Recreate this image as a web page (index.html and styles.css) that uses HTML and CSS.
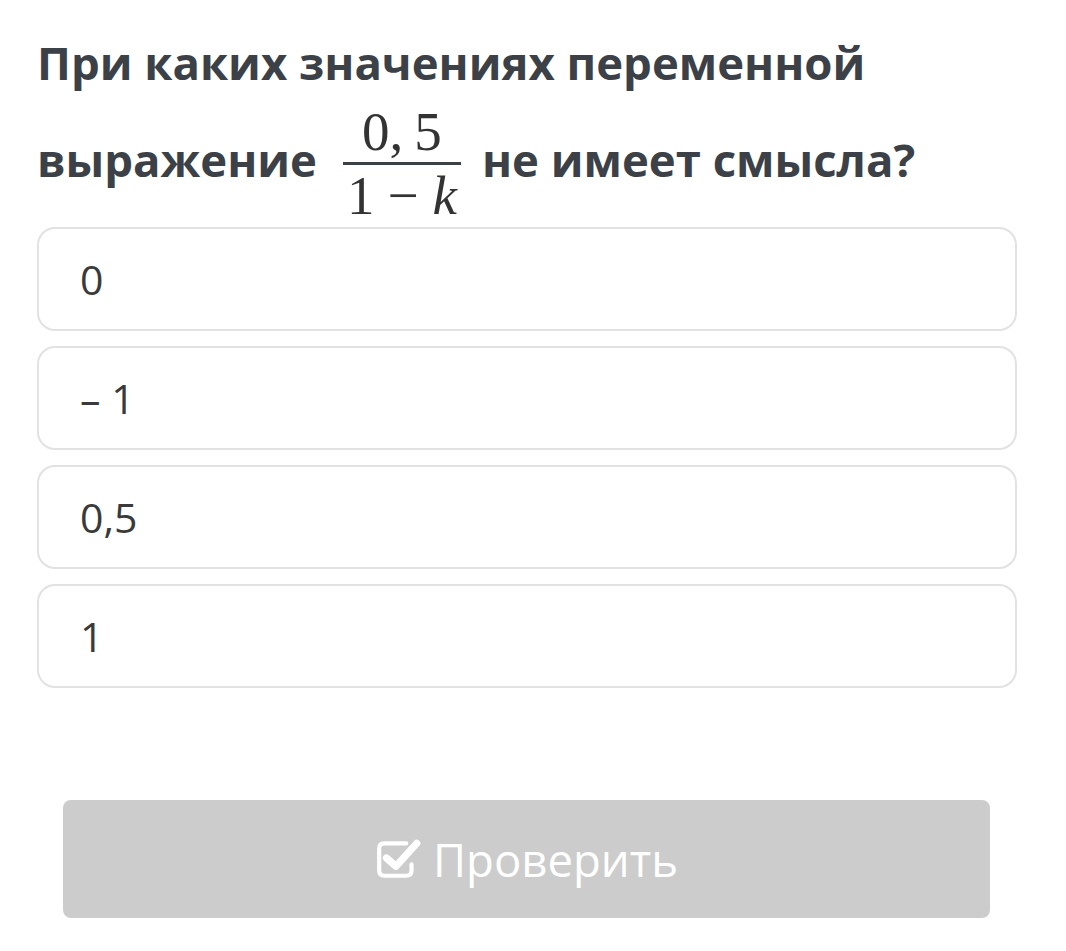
FILE: index.html
```html
<!DOCTYPE html>
<html lang="ru">
<head>
<meta charset="UTF-8">
<title>Вопрос</title>
<link rel="stylesheet" href="styles.css">
</head>
<body>

<div class="quiz">
    <div class="question">
        <div class="q-line">При каких значениях переменной</div>
        <div class="q-line q-math">
            <span>выражение</span>
            <span class="frac">
                <span class="num">0,&thinsp;5</span>
                <span class="den">1<span class="minus">&minus;</span><i>k</i></span>
            </span>
            <span>не имеет смысла?</span>
        </div>
    </div>

    <div class="options">
        <div class="option">0</div>
        <div class="option">&ndash; 1</div>
        <div class="option">0,5</div>
        <div class="option">1</div>
    </div>

    <button class="check-button" disabled>
        <svg class="check-icon" width="48" height="44" viewBox="0 0 46 42">
            <path d="M30 7 H9 Q4 7 4 12 V33 Q4 38 9 38 H30 Q35 38 35 33 V27" fill="none" stroke="#fff" stroke-width="4" stroke-linecap="round"/>
            <path d="M11 21 L20 29 L40 7" fill="none" stroke="#fff" stroke-width="7" stroke-linecap="round" stroke-linejoin="round"/>
        </svg>
        Проверить
    </button>
</div>

</body>
</html>
```

FILE: styles.css
```css
body {
    margin: 0;
    background-color: #fff;
    font-family: "Open Sans", Arial, sans-serif;
}
.quiz {
    padding: 30px 49px 0 37px;
}
.question {
    font-size: 45.5px;
    font-weight: 700;
    line-height: 64px;
    color: #3c4047;
}
.q-math {
    display: flex;
    align-items: center;
    gap: 28px;
    margin-top: 4px;
}
.frac {
    display: flex;
    flex-direction: column;
    align-items: center;
    margin: 6px -7px -6px -2px;
    font-family: "Liberation Serif", "DejaVu Serif", serif;
    font-weight: 400;
    font-size: 55px;
    color: #333;
}
.num {
    align-self: stretch;
    text-align: center;
    line-height: 56px;
    padding-bottom: 2px;
    border-bottom: 3px solid #3c4047;
}
.den {
    line-height: 58px;
    padding: 2px 4px 0;
}
.minus {
    padding: 0 14px 0 13px;
}
.den i {
    font-style: italic;
}
.options {
    display: flex;
    flex-direction: column;
    gap: 15px;
    margin-top: 8px;
}
.option {
    height: 100px;
    display: flex;
    align-items: center;
    padding-left: 41px;
    border: 2px solid #e2e2e2;
    border-radius: 18px;
    font-size: 41px;
    color: #3a3a3a;
}
.check-button {
    display: flex;
    align-items: center;
    justify-content: center;
    gap: 10px;
    width: 927px;
    height: 118px;
    margin: 112px 0 0 26px;
    background-color: #cccccc;
    color: white;
    border: none;
    border-radius: 8px;
    font-family: "Open Sans", Arial, sans-serif;
    font-size: 45.5px;
    padding: 0;
}
.check-icon {
    margin-top: -2px;
}
```
